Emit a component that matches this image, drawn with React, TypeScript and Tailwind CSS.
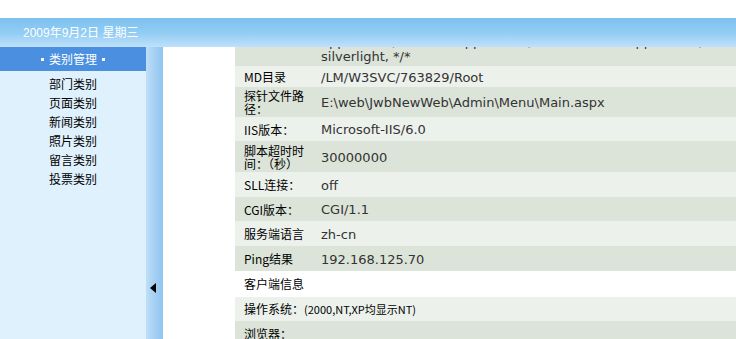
import React from 'react'

type Row = {
  label: React.ReactNode
  value?: React.ReactNode
  h: number
  tone: 'dark' | 'light' | 'white'
  span?: boolean
}

const rows: Row[] = [
  {
    label: '',
    value: (
      <>
        <div className="whitespace-nowrap">application/msword, application/vnd.ms-excel, application/vnd.ms-powerpoint, application/x-</div>
        <div className="whitespace-nowrap">silverlight, */*</div>
      </>
    ),
    h: 35,
    tone: 'dark',
  },
  { label: 'MD目录', value: '/LM/W3SVC/763829/Root', h: 21, tone: 'light' },
  { label: '探针文件路径：', value: 'E:\\web\\JwbNewWeb\\Admin\\Menu\\Main.aspx', h: 30, tone: 'dark' },
  { label: 'IIS版本：', value: 'Microsoft-IIS/6.0', h: 24, tone: 'light' },
  { label: '脚本超时时间：（秒）', value: '30000000', h: 31, tone: 'dark' },
  { label: 'SLL连接：', value: 'off', h: 25, tone: 'light' },
  { label: 'CGI版本：', value: 'CGI/1.1', h: 24, tone: 'dark' },
  { label: '服务端语言', value: 'zh-cn', h: 25, tone: 'light' },
  { label: 'Ping结果', value: '192.168.125.70', h: 25, tone: 'dark' },
  { label: '客户端信息', h: 26, tone: 'white', span: true },
  {
    label: (
      <>
        操作系统：<span className="text-[11px]">(2000,NT,XP均显示NT)</span>
      </>
    ),
    h: 24,
    tone: 'light',
    span: true,
  },
  { label: '浏览器：', h: 25, tone: 'dark', span: true },
]

const menu = ['部门类别', '页面类别', '新闻类别', '照片类别', '留言类别', '投票类别']

const toneClass = {
  dark: 'bg-[#dce4d9]',
  light: 'bg-[#edf1ec]',
  white: 'bg-white',
}

export default function App() {
  return (
    <div className="w-[736px] h-[339px] overflow-hidden bg-white font-['Noto_Sans_CJK_SC',sans-serif] text-[12px] text-black">
      <div className="h-[18px] bg-white" />

      {/* top bar */}
      <div className="h-[29px] bg-linear-to-b from-[#7dc1ef] via-[#91ccf4] to-[#bfe0f9] flex items-center pl-[23px] text-white text-[12px] font-['Liberation_Sans','Noto_Sans_CJK_SC',sans-serif]">
        2009年9月2日&nbsp;星期三
      </div>

      <div className="flex h-[292px]">
        {/* left menu */}
        <aside className="w-[146px] bg-[#dff1fd] shrink-0">
          <div className="h-[24px] bg-[#4b90e0] flex items-center justify-center gap-[5px] text-white">
            <span className="w-[3px] h-[3px] bg-white" />
            <span>类别管理</span>
            <span className="w-[3px] h-[3px] bg-white" />
          </div>
          <ul className="pt-[3px] pl-[49px]">
            {menu.map((m) => (
              <li key={m} className="leading-[19px] h-[19px]">
                {m}
              </li>
            ))}
          </ul>
        </aside>

        {/* splitter */}
        <div className="w-[17px] shrink-0 bg-linear-to-r from-[#c0def7] via-[#a5d0f3] to-[#8fc4ef] flex flex-col pt-[236px] pl-[4px]">
          <span className="w-0 h-0 border-y-[5px] border-y-transparent border-r-[6px] border-r-black" />
        </div>

        {/* content, scrolled so the accept row is partly hidden */}
        <main className="flex-1 overflow-hidden pl-[72px]">
          <div className="w-[620px] -mt-[16px]">
            {rows.map((r, i) => (
              <div
                key={i}
                className={`flex items-center ${toneClass[r.tone]}`}
                style={{ height: r.h }}
              >
                {r.span ? (
                  <div className="pl-[9px] leading-[14px]">{r.label}</div>
                ) : (
                  <>
                    <div className="w-[80px] shrink-0 pl-[9px] pr-[6px] leading-[13px]">{r.label}</div>
                    <div className="pl-[6px] pt-[1px] text-[13px] leading-[15px] text-[#333] font-['DejaVu_Sans','Noto_Sans_CJK_SC',sans-serif]">
                      {r.value}
                    </div>
                  </>
                )}
              </div>
            ))}
          </div>
        </main>
      </div>
    </div>
  )
}
